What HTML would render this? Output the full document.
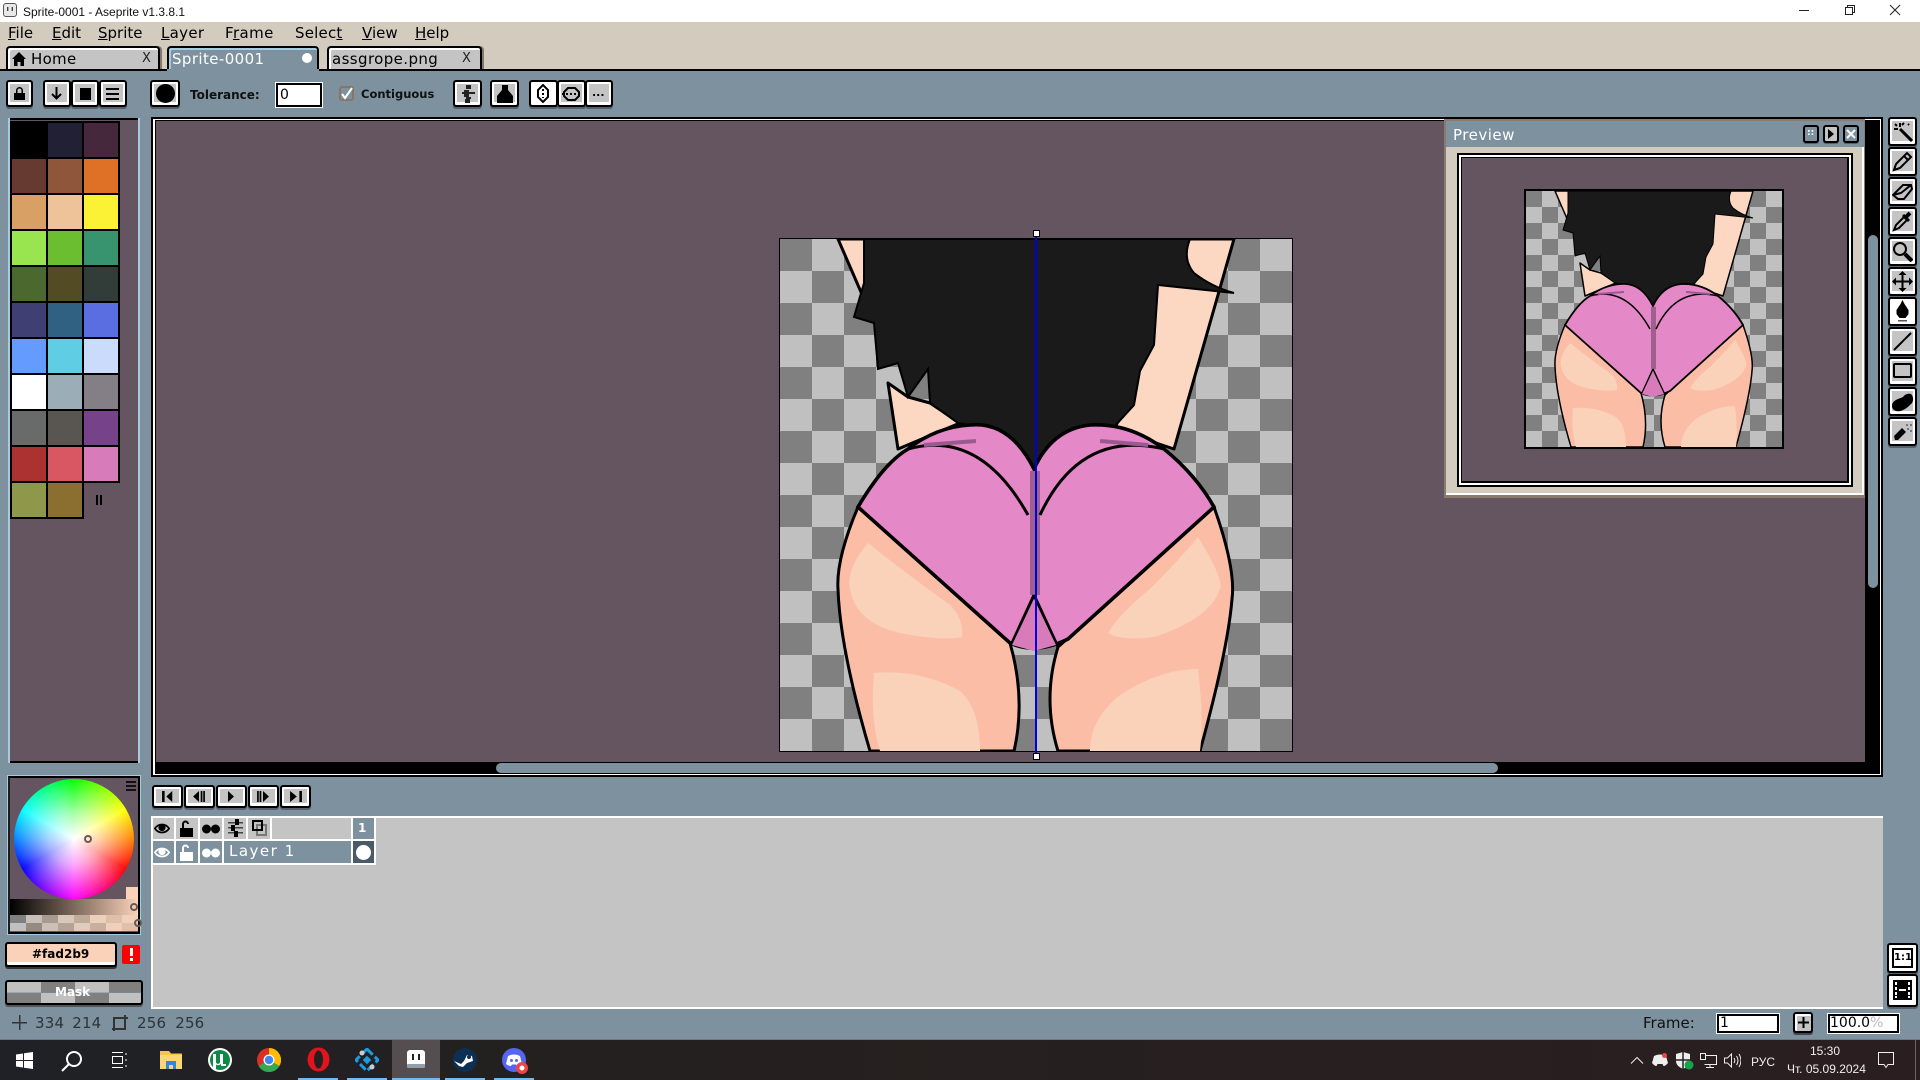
<!DOCTYPE html>
<html>
<head>
<meta charset="utf-8">
<title>Sprite-0001 - Aseprite v1.3.8.1</title>
<style>
html,body{margin:0;padding:0;width:1920px;height:1080px;overflow:hidden;background:#7d929e}
#r{position:relative;width:1920px;height:1080px;overflow:hidden;font-family:"DejaVu Sans","Liberation Sans",sans-serif;color:#000}
#r div,#r span,#r svg{position:absolute;box-sizing:border-box}
.t{white-space:nowrap;line-height:1}
.b{background:#c4c4c4;border:2px solid #000;border-radius:3px;box-shadow:inset 0 2px 0 #fff,inset 2px 0 0 #fff,inset -2px 0 0 #fff,inset 0 -3px 0 #fff,0 2px 0 #55606a}
.p{width:34px;height:34px}
.u{text-decoration:underline}
.i{background:#fff;border:2px solid #000;box-shadow:0 0 0 1px #fff}
.tab{height:24px;top:46px;background:#c4c4c4;border:2px solid #000;border-bottom:0;border-radius:4px 4px 0 0;box-shadow:inset 2px 2px 0 #fff,2px 0 0 #85766e}
</style>
</head>
<body>
<div id="r">

<!-- title bar -->
<div style="left:0;top:0;width:1920px;height:22px;background:#fff"></div>
<svg style="left:3px;top:3px" width="14" height="14" viewBox="0 0 14 14"><rect x=".5" y=".5" width="13" height="13" rx="2.5" fill="#e8e8e8" stroke="#555"/><rect x="4" y="4" width="1.4" height="4" fill="#444"/><rect x="8.600" y="4" width="1.4" height="4" fill="#444"/></svg>
<div class="t" style="left:23px;top:5px;font:12px 'Liberation Sans',sans-serif;color:#111">Sprite-0001 - Aseprite v1.3.8.1</div>
<svg style="left:1798px;top:4px" width="122" height="12" viewBox="0 0 122 12" fill="none" stroke="#222"><path d="M1 6.500h10"/><rect x="47.500" y="3.500" width="7" height="7"/><path d="M49.500 3.500v-2h7v7h-2"/><path d="M92 1l10 10M102 1L92 11"/></svg>

<!-- menu -->
<div style="left:0;top:22px;width:1920px;height:48px;background:#d3cbbe"></div>
<div class="t" style="left:8px;top:26px;font-size:15px"><span class="u" style="position:static">F</span>ile</div>
<div class="t" style="left:52px;top:26px;font-size:15px"><span class="u" style="position:static">E</span>dit</div>
<div class="t" style="left:98px;top:26px;font-size:15px"><span class="u" style="position:static">S</span>prite</div>
<div class="t" style="left:161px;top:26px;font-size:15px;letter-spacing:.3px"><span class="u" style="position:static">L</span>ayer</div>
<div class="t" style="left:225px;top:26px;font-size:15px;letter-spacing:.4px">F<span class="u" style="position:static">r</span>ame</div>
<div class="t" style="left:295px;top:26px;font-size:15px;letter-spacing:.2px">Selec<span class="u" style="position:static">t</span></div>
<div class="t" style="left:362px;top:26px;font-size:15px"><span class="u" style="position:static">V</span>iew</div>
<div class="t" style="left:415px;top:26px;font-size:15px"><span class="u" style="position:static">H</span>elp</div>

<!-- tabs -->
<div class="tab" style="left:6px;width:154px"></div>
<svg style="left:12px;top:52px" width="14" height="14" viewBox="0 0 14 14"><path d="M7 0L0 7h2v7h3.500v-4h3v4H12V7h2z"/></svg>
<div class="t" style="left:31px;top:52px;font-size:15px;letter-spacing:.3px">Home</div>
<div class="t" style="left:142px;top:52px;font-size:13px;color:#222">X</div>
<div class="tab" style="left:167px;width:152px;background:#7d929e;box-shadow:inset 2px 2px 0 #a5cbe0;border-color:#000"></div>
<div class="t" style="left:172px;top:52px;font-size:15px;letter-spacing:.4px;color:#fff">Sprite-0001</div>
<div style="left:302px;top:53px;width:10px;height:10px;border-radius:50%;background:#fff"></div>
<div class="tab" style="left:327px;width:155px"></div>
<div class="t" style="left:332px;top:52px;font-size:15px;letter-spacing:.4px">assgrope.png</div>
<div class="t" style="left:462px;top:52px;font-size:13px;color:#222">X</div>

<!-- toolbar -->
<div style="left:0;top:69px;width:1920px;height:2px;background:#000"></div>
<div style="left:167px;top:69px;width:152px;height:2px;background:#7d929e"></div>
<div style="left:0;top:71px;width:1920px;height:969px;background:#7d929e"></div>

<div class="b" style="left:6px;top:80px;width:27px;height:27px"></div>
<svg style="left:13px;top:87px" width="13" height="13" viewBox="0 0 13 13"><path d="M3 6V3.500a3.500 3.500 0 017 0V6h2v7H1V6zM4.500 6h4V3.500a2 2 0 00-4 0z"/></svg>
<div class="b" style="left:43px;top:80px;width:28px;height:27px"></div>
<svg style="left:50px;top:87px" width="13" height="13" viewBox="0 0 13 13" fill="none" stroke="#000" stroke-width="2"><path d="M6.500 0v11M2 7l4.500 4.500L11 7"/></svg>
<div class="b" style="left:71px;top:80px;width:28px;height:27px"></div>
<div style="left:80px;top:88px;width:11px;height:12px;background:#000"></div>
<div class="b" style="left:99px;top:80px;width:28px;height:27px"></div>
<svg style="left:106px;top:88px" width="13" height="12" viewBox="0 0 13 12"><path d="M0 0h13v2H0zM0 5h13v2H0zM0 10h13v2H0z"/></svg>

<div class="b" style="left:150px;top:80px;width:30px;height:27px"></div>
<div style="left:156px;top:84px;width:19px;height:19px;border-radius:50%;background:#000"></div>
<div class="t" style="left:190px;top:89px;font-size:12px;font-weight:bold;color:#111">Tolerance:</div>
<div class="i" style="left:276px;top:83px;width:46px;height:24px"></div>
<div class="t" style="left:280px;top:88px;font-size:14px">0</div>
<svg style="left:339px;top:86px" width="15" height="15" viewBox="0 0 15 15"><rect x="1" y="1" width="13" height="13" rx="2" fill="none" stroke="#8a7468" stroke-width="2"/><path d="M3 8l3 4 7-10" fill="none" stroke="#fff" stroke-width="2"/></svg>
<div class="t" style="left:361px;top:89px;font-size:11.500px;font-weight:bold;color:#111">Contiguous</div>

<div class="b" style="left:453px;top:80px;width:29px;height:27px"></div>
<svg style="left:460px;top:85px" width="15" height="18" viewBox="0 0 15 18" fill="#222"><path d="M6 0h5v4H6zM2 7h13v2H2zM4 5h5v6H4zM6 12h5v2H6zM4 10h5v2H4zM5 14h5v4H5z"/></svg>
<div class="b" style="left:490px;top:80px;width:29px;height:27px"></div>
<svg style="left:497px;top:85px" width="16" height="18" viewBox="0 0 16 18"><path d="M5 0h6v5l5 6v7H0v-7l5-6z"/></svg>
<div class="b" style="left:529px;top:80px;width:29px;height:27px;background:#fff"></div>
<svg style="left:536px;top:84px" width="14" height="19" viewBox="0 0 14 19" fill="none" stroke="#000" stroke-width="2"><path d="M7 1L2 6v7l5 5 5-5V6z"/><path d="M7 5v9" stroke-dasharray="2 2"/></svg>
<div class="b" style="left:557px;top:80px;width:29px;height:27px"></div>
<svg style="left:561px;top:87px" width="21" height="14" viewBox="0 0 21 14" fill="none" stroke="#000" stroke-width="2"><path d="M7 1h7l4 4v4l-4 4H7L3 9V5z"/><path d="M1 7h19" stroke-dasharray="2 2"/></svg>
<div class="b" style="left:585px;top:80px;width:28px;height:27px"></div>
<div class="t" style="left:592px;top:87px;font-size:11px;font-weight:bold">...</div>

<!-- palette -->
<div style="left:8px;top:118px;width:132px;height:645px;background:#645560;box-shadow:inset 2px 0 0 #a5cbe0,inset -2px 0 0 #a5cbe0,inset 0 2px 0 #000,inset 0 -2px 0 #000"></div>
<div style="left:10px;top:121px;width:110px;height:398px;background:#000"></div>
<div style="left:84px;top:483px;width:36px;height:36px;background:#645560"></div>
<div class="p" style="left:12px;top:123px;background:#000"></div><div class="p" style="left:48px;top:123px;background:#222034"></div><div class="p" style="left:84px;top:123px;background:#45283c"></div>
<div class="p" style="left:12px;top:159px;background:#663931"></div><div class="p" style="left:48px;top:159px;background:#8f563b"></div><div class="p" style="left:84px;top:159px;background:#df7126"></div>
<div class="p" style="left:12px;top:195px;background:#d9a066"></div><div class="p" style="left:48px;top:195px;background:#eec39a"></div><div class="p" style="left:84px;top:195px;background:#fbf236"></div>
<div class="p" style="left:12px;top:231px;background:#99e550"></div><div class="p" style="left:48px;top:231px;background:#6abe30"></div><div class="p" style="left:84px;top:231px;background:#37946e"></div>
<div class="p" style="left:12px;top:267px;background:#4b692f"></div><div class="p" style="left:48px;top:267px;background:#524b24"></div><div class="p" style="left:84px;top:267px;background:#323c39"></div>
<div class="p" style="left:12px;top:303px;background:#3f3f74"></div><div class="p" style="left:48px;top:303px;background:#306082"></div><div class="p" style="left:84px;top:303px;background:#5b6ee1"></div>
<div class="p" style="left:12px;top:339px;background:#639bff"></div><div class="p" style="left:48px;top:339px;background:#5fcde4"></div><div class="p" style="left:84px;top:339px;background:#cbdbfc"></div>
<div class="p" style="left:12px;top:375px;background:#fff"></div><div class="p" style="left:48px;top:375px;background:#9badb7"></div><div class="p" style="left:84px;top:375px;background:#847e87"></div>
<div class="p" style="left:12px;top:411px;background:#696a6a"></div><div class="p" style="left:48px;top:411px;background:#595652"></div><div class="p" style="left:84px;top:411px;background:#76428a"></div>
<div class="p" style="left:12px;top:447px;background:#ac3232"></div><div class="p" style="left:48px;top:447px;background:#d95763"></div><div class="p" style="left:84px;top:447px;background:#d77bba"></div>
<div class="p" style="left:12px;top:483px;background:#8f974a"></div><div class="p" style="left:48px;top:483px;background:#8a6f30"></div>
<div style="left:96px;top:495px;width:2px;height:10px;background:#000"></div><div style="left:100px;top:495px;width:2px;height:10px;background:#000"></div>

<!-- colour wheel -->
<div style="left:8px;top:776px;width:132px;height:158px;background:#645560;border:2px solid #000;border-left-color:#1c1c1c;box-shadow:0 0 0 1px #a5cbe0"></div>
<div style="left:14px;top:779px;width:120px;height:120px;border-radius:50%;background:radial-gradient(circle,#fff 0%,rgba(255,255,255,.65) 30%,rgba(255,255,255,0) 72%),conic-gradient(#0f0,#ff0,#f00,#f0f,#00f,#0ff,#0f0)"></div>
<div style="left:84px;top:835px;width:8px;height:8px;border:2px solid #6a5a55;border-radius:50%"></div>
<div style="left:126px;top:781px;width:10px;height:2px;background:#111"></div><div style="left:126px;top:785px;width:10px;height:2px;background:#111"></div><div style="left:126px;top:789px;width:10px;height:2px;background:#111"></div>
<div style="left:126px;top:887px;width:12px;height:12px;background:#fad2b9"></div>
<div style="left:10px;top:899px;width:128px;height:16px;background:linear-gradient(90deg,#000,#fad2b9)"></div>
<div style="left:10px;top:915px;width:128px;height:16px;background:
linear-gradient(90deg,#808080 0 16px,#c8c0b8 16px 32px,#a89a8e 32px 48px,#d8c8ba 48px 64px,#c0aa9a 64px 80px,#ecd0bc 80px 96px,#dfbfa8 96px 112px,#f2d0ba 112px) top/100% 8px no-repeat,
linear-gradient(90deg,#c0c0c0 0 16px,#948c84 16px 32px,#ccc0b6 32px 48px,#b4a496 48px 64px,#e0ccbc 64px 80px,#c8b09e 80px 96px,#f0d0bc 96px 112px,#e0c0aa 112px) bottom/100% 8px no-repeat"></div>
<div style="left:130px;top:903px;width:8px;height:8px;border:2px solid #6a5a55;border-radius:50%"></div>
<div style="left:134px;top:919px;width:8px;height:8px;border:2px solid #6a5a55;border-radius:50%"></div>

<div class="b" style="left:5px;top:942px;width:112px;height:25px;background:#fad2b9;box-shadow:inset 0 -3px 0 #fff,0 2px 0 #333"></div>
<div class="t" style="left:32px;top:948px;font-size:12px;font-weight:bold">#fad2b9</div>
<div style="left:122px;top:945px;width:18px;height:19px;background:#f00;border-radius:2px"></div>
<div style="left:130px;top:948px;width:3px;height:8px;background:#fff"></div><div style="left:130px;top:958px;width:3px;height:3px;background:#fff"></div>

<div style="left:5px;top:980px;width:138px;height:25px;border:2px solid #000;border-radius:3px;box-shadow:0 2px 0 #555;background:
linear-gradient(90deg,#c0c0c0 0 34px,#808080 34px 68px,#c0c0c0 68px 102px,#808080 102px) top/100% 50% no-repeat,
linear-gradient(90deg,#808080 0 34px,#c0c0c0 34px 68px,#808080 68px 102px,#c0c0c0 102px) bottom/100% 50% no-repeat"></div>
<div class="t" style="left:55px;top:986px;font-size:12px;font-weight:bold;color:#fff">Mask</div>

<!-- editor -->
<div style="left:151px;top:117px;width:1732px;height:660px;background:#000"></div>
<div style="left:153px;top:119px;width:1728px;height:656px;background:#fff"></div>
<div style="left:155px;top:120px;width:1725px;height:654px;background:#000"></div>
<div style="left:156px;top:121px;width:1709px;height:641px;background:#645560"></div>

<svg style="left:779px;top:238px" width="514" height="514" viewBox="-0.500 -0.500 257 257">
<defs>
<pattern id="c" width="32" height="32" patternUnits="userSpaceOnUse"><rect width="32" height="32" fill="#c0c0c0"/><rect width="16" height="16" fill="#808080"/><rect x="16" y="16" width="16" height="16" fill="#808080"/></pattern>
<g id="art">
<rect x="0" y="0" width="256" height="256" fill="url(#c)"/>
<g stroke="#000" stroke-width="1.500" stroke-linejoin="round" fill="#fcd7c2">
<path d="M29 0L42 30 46 0z"/>
<path d="M204 0h23l-8 28-22 77-30-10 8-15 5-30 5-30z"/>
<path d="M54 72l5 33 31-13-15-10-11-3z"/>
</g>
<path d="M42 0H205Q201 10 207 17Q216 24 227 27L189 23 187 53 180 66 177 83 167 94 147 95 134 105 127 115 120 104 107 95 89 92 75 82 74 65 64 79 59 62 49 65 47 42 37 39 42 22z" fill="#1a1a1a" stroke="#000"/>
<g stroke="#000" stroke-width="1.500" fill="#fcbda7">
<path d="M39 134Q28 160 29 175Q30 205 45 256H117Q123 230 115 202z"/>
<path d="M217 134Q228 165 226 180Q224 205 210 256H139Q131 230 139 204z"/>
</g>
<g fill="#fad2b9">
<path d="M44 152Q33 165 35 175Q38 192 60 197Q80 201 91 199Q92 190 85 183Q60 165 44 152z"/>
<path d="M47 217Q45 240 50 256H100Q100 235 90 226Q70 215 47 217z"/>
<path d="M209 149Q222 170 220 175Q215 190 187 199Q170 201 164 197Q170 187 185 175Q200 160 209 149z"/>
<path d="M209 215Q212 240 210 256H155Q155 240 170 228Q190 215 209 215z"/>
</g>
<path d="M39 134Q52 112 64 105Q78 94 95 93Q115 91 127 115Q136 95 155 93Q175 92 192 105Q208 118 217 134L144 200Q128 208 115 202z" fill="#e588c8" stroke="#000" stroke-width="1.800"/>
<path d="M125 116h5v62h-5z" fill="#a0608f"/>
<path d="M64 105Q100 95 124 138M192 105Q150 95 130 138M127 178L116 202M127 178L139 204" fill="none" stroke="#000" stroke-width="1.500"/>
<path d="M72 103l26-2" fill="none" stroke="#9a5a90" stroke-width="2"/>
<path d="M160 101l24 2" fill="none" stroke="#9a5a90" stroke-width="2"/>
<path d="M127 180l11 23-11 3-11-3z" fill="#d77bba"/>
<rect x="-.5" y="-.5" width="257" height="257" fill="none" stroke="#000" stroke-width="1"/>
</g>
</defs>
<use href="#art"/>
</svg>
<div style="left:1035px;top:233px;width:2px;height:524px;background:#0000d8"></div>
<div style="left:1033px;top:230px;width:7px;height:7px;background:#fff;border:1px solid #000"></div>
<div style="left:1033px;top:753px;width:7px;height:7px;background:#fff;border:1px solid #000"></div>
<div style="left:496px;top:763px;width:1002px;height:10px;background:#7d929e;border-radius:5px"></div>
<div style="left:1868px;top:235px;width:10px;height:353px;background:#7d929e;border-radius:5px"></div>

<!-- preview window -->
<div style="left:1444px;top:119px;width:421px;height:379px;background:#8a7a70"></div>
<div style="left:1446px;top:121px;width:418px;height:374px;background:#d3cbbe;box-shadow:inset -2px -2px 0 #fff"></div>
<div style="left:1446px;top:121px;width:418px;height:26px;background:#7d929e"></div>
<div class="t" style="left:1453px;top:128px;font-size:15px;letter-spacing:.5px;color:#fff">Preview</div>
<div class="b" style="left:1803px;top:125px;width:16px;height:18px;background:#7d929e;box-shadow:0 1px 0 #55606a"></div>
<div class="t" style="left:1807px;top:129px;font-size:9px;color:#fff;font-weight:bold">::</div>
<div class="b" style="left:1823px;top:125px;width:16px;height:18px;box-shadow:0 1px 0 #55606a"></div>
<svg style="left:1827px;top:129px" width="8" height="10" viewBox="0 0 8 10"><path d="M1 0l6 5-6 5z"/></svg>
<div class="b" style="left:1843px;top:125px;width:16px;height:18px;background:#7d929e;box-shadow:0 1px 0 #55606a"></div>
<svg style="left:1846px;top:129px" width="10" height="10" viewBox="0 0 10 10" fill="none" stroke="#fff" stroke-width="2"><path d="M1 1l8 8M9 1L1 9"/></svg>
<div style="left:1457px;top:153px;width:396px;height:334px;background:#000"></div>
<div style="left:1459px;top:155px;width:392px;height:330px;background:#fff"></div>
<div style="left:1461px;top:157px;width:388px;height:326px;background:#000"></div>
<div style="left:1462px;top:158px;width:385px;height:323px;background:#645560"></div>
<svg style="left:1524px;top:189px" width="260" height="260" viewBox="-2 -2 260 260"><use href="#art"/><rect x="-1" y="-1" width="258" height="258" fill="none" stroke="#000" stroke-width="2"/></svg>

<!-- right tools -->
<div class="b" style="left:1888px;top:117px;width:29px;height:29px"></div>
<svg style="left:1892px;top:121px" width="21" height="21" viewBox="0 0 21 21" fill="none" stroke="#000" stroke-width="2"><path d="M8 8l12 12" stroke-width="3"/><path d="M8 2v4M2 8h4M3 3l2 2M12 2l-2 2M16 3l1 1"/></svg>
<div class="b" style="left:1888px;top:147px;width:29px;height:29px"></div>
<svg style="left:1892px;top:151px" width="21" height="21" viewBox="0 0 21 21" fill="none" stroke="#000" stroke-width="2"><path d="M2 19l2-6L15 2l4 4L8 17z"/><path d="M12 5l4 4"/></svg>
<div class="b" style="left:1888px;top:177px;width:29px;height:29px"></div>
<svg style="left:1892px;top:181px" width="21" height="21" viewBox="0 0 21 21" fill="none" stroke="#000" stroke-width="2"><path d="M1 14l5 4h6l8-10-1-4h-8z"/><path d="M1 14l8-2 10-8"/></svg>
<div class="b" style="left:1888px;top:207px;width:29px;height:29px"></div>
<svg style="left:1892px;top:211px" width="21" height="21" viewBox="0 0 21 21" fill="none" stroke="#000" stroke-width="2"><path d="M2 19l2-5 8-8 3 3-8 8z"/><path d="M11 4l6 6" stroke-width="3"/><path d="M14 6l4-4" stroke-width="4"/></svg>
<div class="b" style="left:1888px;top:237px;width:29px;height:29px"></div>
<svg style="left:1892px;top:241px" width="21" height="21" viewBox="0 0 21 21" fill="none" stroke="#000" stroke-width="2"><circle cx="8" cy="8" r="6"/><path d="M13 13l7 7" stroke-width="4"/></svg>
<div class="b" style="left:1888px;top:267px;width:29px;height:29px"></div>
<svg style="left:1892px;top:271px" width="21" height="21" viewBox="0 0 21 21"><path d="M10.500 0l4 4h-3v5.500H17v-3l4 4-4 4v-3h-5.500V17h3l-4 4-4-4h3v-5.500H4v3l-4-4 4-4v3h5.500V4h-3z"/></svg>
<div class="b" style="left:1888px;top:297px;width:29px;height:29px;background:#fff"></div>
<svg style="left:1895px;top:300px" width="15" height="22" viewBox="0 0 15 22"><path d="M7.500 0l2 4 4 6v4l-3 4h-6l-3-4v-4l4-6z"/><rect x="3" y="20" width="9" height="1.500" fill="#555"/></svg>
<div class="b" style="left:1888px;top:327px;width:29px;height:29px"></div>
<svg style="left:1892px;top:331px" width="21" height="21" viewBox="0 0 21 21" fill="none" stroke="#000" stroke-width="2"><path d="M2 19L19 2"/></svg>
<div class="b" style="left:1888px;top:357px;width:29px;height:29px"></div>
<div style="left:1893px;top:363px;width:19px;height:15px;border:2px solid #000;border-radius:2px"></div>
<div class="b" style="left:1888px;top:387px;width:29px;height:29px"></div>
<svg style="left:1891px;top:392px" width="23" height="20" viewBox="0 0 23 20"><path d="M1 14C1 8 8 7 12 5c2-3 6-4 8-3 3 3 3 8-1 11-5 5-10 7-14 6-3-1-4-3-4-5z"/></svg>
<div class="b" style="left:1888px;top:417px;width:29px;height:29px"></div>
<svg style="left:1892px;top:421px" width="21" height="21" viewBox="0 0 21 21"><path d="M2 15l8-8 4 4-8 8H3z"/><path d="M15 7h2v2h-2zM18 3h2v2h-2zM14 3h2v2h-2zM18 9h2v2h-2z" fill="#777"/></svg>

<!-- anim buttons -->
<div class="b" style="left:152px;top:785px;width:31px;height:23px"></div>
<svg style="left:162px;top:791px" width="12" height="11" viewBox="0 0 14 13"><path d="M0 0h3v13H0zM12 0v13L5 6.500z"/></svg>
<div class="b" style="left:184px;top:785px;width:31px;height:23px"></div>
<svg style="left:193px;top:791px" width="12" height="11" viewBox="0 0 14 13"><path d="M7 0v13L0 6.500zM9 0h2v13H9zM12 0h2v13h-2z"/></svg>
<div class="b" style="left:216px;top:785px;width:31px;height:23px"></div>
<svg style="left:227px;top:791px" width="8" height="11" viewBox="0 0 9 13"><path d="M1 0l7 6.500-7 6.500z"/></svg>
<div class="b" style="left:248px;top:785px;width:31px;height:23px"></div>
<svg style="left:257px;top:791px" width="12" height="11" viewBox="0 0 14 13"><path d="M0 0h2v13H0zM3 0h2v13H3zM7 0l7 6.500L7 13z"/></svg>
<div class="b" style="left:280px;top:785px;width:31px;height:23px"></div>
<svg style="left:290px;top:791px" width="12" height="11" viewBox="0 0 14 13"><path d="M0 0l8 6.500L0 13zM11 0h3v13h-3z"/></svg>

<!-- timeline -->
<div style="left:151px;top:816px;width:1732px;height:193px;background:#c4c4c4;border:2px solid #fff;border-right:0"></div>
<div style="left:174px;top:816px;width:2px;height:49px;background:#fff"></div>
<div style="left:198px;top:816px;width:2px;height:49px;background:#fff"></div>
<div style="left:222px;top:816px;width:2px;height:49px;background:#fff"></div>
<div style="left:246px;top:816px;width:2px;height:25px;background:#fff"></div>
<div style="left:270px;top:816px;width:2px;height:25px;background:#fff"></div>
<div style="left:351px;top:816px;width:25px;height:49px;background:#fff"></div>
<div style="left:153px;top:839px;width:223px;height:2px;background:#fff"></div>
<div style="left:153px;top:863px;width:223px;height:2px;background:#fff"></div>
<div style="left:153px;top:841px;width:21px;height:22px;background:#7d929e"></div>
<div style="left:176px;top:841px;width:22px;height:22px;background:#7d929e"></div>
<div style="left:200px;top:841px;width:22px;height:22px;background:#7d929e"></div>
<div style="left:224px;top:841px;width:127px;height:22px;background:#7d929e"></div>
<div style="left:353px;top:818px;width:21px;height:21px;background:#7d929e"></div>
<div style="left:353px;top:841px;width:21px;height:22px;background:#4a5a66"></div>
<div class="t" style="left:358px;top:822px;font-size:12px;font-weight:bold;color:#fff">1</div>
<div style="left:356px;top:845px;width:15px;height:15px;border-radius:50%;background:#fff"></div>
<div class="t" style="left:229px;top:844px;font-size:15px;letter-spacing:1.500px;color:#fff">Layer 1</div>
<svg style="left:154px;top:822px" width="16" height="13" viewBox="0 0 18 14" fill="none" stroke="#000" stroke-width="2"><path d="M1 7c4-6 12-6 16 0-4 6-12 6-16 0z"/><circle cx="9" cy="6" r="3" fill="#000"/></svg>
<svg style="left:154px;top:846px" width="16" height="13" viewBox="0 0 18 14" fill="none" stroke="#fff" stroke-width="2"><path d="M1 7c4-6 12-6 16 0-4 6-12 6-16 0z"/><circle cx="9" cy="6" r="3" fill="#fff"/></svg>
<svg style="left:180px;top:820px" width="13" height="17" viewBox="0 0 13 17"><path d="M2 8V4a3.500 3.500 0 017 0h-2a1.500 1.500 0 00-3 0v4h9v9H0V8z"/></svg>
<svg style="left:180px;top:844px" width="13" height="17" viewBox="0 0 13 17" fill="#fff"><path d="M2 8V4a3.500 3.500 0 017 0h-2a1.500 1.500 0 00-3 0v4h9v9H0V8z"/></svg>
<svg style="left:202px;top:824px" width="18" height="10" viewBox="0 0 18 10"><circle cx="4.500" cy="5" r="4.500"/><circle cx="13.500" cy="5" r="4.500"/></svg>
<svg style="left:202px;top:848px" width="18" height="10" viewBox="0 0 18 10" fill="#fff"><circle cx="4.500" cy="5" r="4.500"/><circle cx="13.500" cy="5" r="4.500"/></svg>
<svg style="left:228px;top:819px" width="15" height="18" viewBox="0 0 15 18"><path d="M0 3h15v1.500H0zM0 8h15v1.500H0zM0 13h15v1.500H0z" fill="#444"/><path d="M7 0h4v6H7zM3 6h4v6H3zM6 12h4v6H6z"/></svg>
<svg style="left:252px;top:820px" width="15" height="16" viewBox="0 0 15 16" fill="none"><path d="M5 5h9v10H5z" stroke="#777" stroke-width="2"/><path d="M1 1h9v9H1z" stroke="#000" stroke-width="2"/></svg>

<div class="b" style="left:1887px;top:943px;width:31px;height:30px;background:#fff"></div>
<div style="left:1892px;top:948px;width:21px;height:20px;border:2px solid #000"></div>
<div class="t" style="left:1894px;top:953px;font-size:10px;font-weight:bold">1:1</div>
<div class="b" style="left:1887px;top:974px;width:31px;height:33px;background:#fff"></div>
<svg style="left:1893px;top:980px" width="19" height="20" viewBox="0 0 19 20"><path d="M0 0h19v20H0z"/><path d="M2 2h2v3H2zM15 2h2v3h-2zM2 7h2v3H2zM15 7h2v3h-2zM2 12h2v3H2zM15 12h2v3h-2zM2 16h2v2H2zM15 16h2v2h-2zM6 9h7v2H6z" fill="#fff"/></svg>

<!-- status bar -->
<svg style="left:12px;top:1015px" width="15" height="15" viewBox="0 0 15 15"><path d="M7 0h1.500v15H7zM0 7h15v1.500H0z" fill="#333"/></svg>
<div class="t" style="left:35px;top:1016px;font-size:15px;letter-spacing:.2px;color:#2d3338;word-spacing:3px">334 214</div>
<svg style="left:112px;top:1015px" width="16" height="16" viewBox="0 0 16 16" fill="none" stroke="#333" stroke-width="2"><path d="M2 3h11v11H2zM13 0v3h3M0 14h2v2"/></svg>
<div class="t" style="left:137px;top:1016px;font-size:15px;letter-spacing:.2px;color:#2d3338;word-spacing:4px">256 256</div>
<div class="t" style="left:1643px;top:1016px;font-size:15px;color:#111">Frame:</div>
<div class="i" style="left:1717px;top:1014px;width:62px;height:19px"></div>
<div class="t" style="left:1720px;top:1016px;font-size:14px">1</div>
<div class="b" style="left:1793px;top:1012px;width:20px;height:21px;box-shadow:inset 2px 2px 0 #fff,0 2px 0 #445"></div>
<svg style="left:1798px;top:1017px" width="11" height="11" viewBox="0 0 11 11"><path d="M4.500 0h2v4.500H11v2H6.500V11h-2V6.500H0v-2h4.500z"/></svg>
<div class="i" style="left:1828px;top:1014px;width:71px;height:19px"></div>
<div class="t" style="left:1830px;top:1016px;font-size:14px">100.0<span style="position:static;color:#bbb">%</span></div>

<!-- taskbar -->
<div style="left:0;top:1040px;width:1920px;height:40px;background:linear-gradient(90deg,#1f2126,#24201f 30%,#2a1e20)"></div>
<div style="left:0;top:1039px;width:1920px;height:1px;background:#6a7a84"></div>
<svg style="left:16px;top:1052px" width="17" height="17" viewBox="0 0 17 17" fill="#fff"><path d="M0 2.500L7 1.500V8H0zM8 1.300L17 0v8H8zM0 9h7v6.500L0 14.500zM8 9h9v8l-9-1.300z"/></svg>
<svg style="left:61px;top:1050px" width="22" height="22" viewBox="0 0 22 22" fill="none" stroke="#fff" stroke-width="2"><circle cx="13" cy="9" r="7"/><path d="M8 14l-7 7"/></svg>
<svg style="left:112px;top:1052px" width="16" height="16" viewBox="0 0 16 16" fill="none" stroke="#fff"><path d="M0 .5h11M0 15.500h11M.5 4.500h10v7H.5zM14 1v2M14 7v2M14 13v2" /></svg>
<svg style="left:160px;top:1051px" width="22" height="18" viewBox="0 0 22 18"><path d="M0 0h9l2 2.500h11V18H0z" fill="#f5c54a"/><path d="M0 4h22v14H0z" fill="#fbd774"/><path d="M6 10h10v8H6z" fill="#2f88d9"/><path d="M9 14h4v4H9z" fill="#fbd774"/></svg>
<svg style="left:208px;top:1048px" width="24" height="24" viewBox="0 0 24 24"><circle cx="12" cy="12" r="12" fill="#fff"/><circle cx="12" cy="12" r="10" fill="#0b8a45"/><path d="M5 6h3v8c0 2.500 4 2.500 4 0V6h3v10h3v2h-5v-2c-2 1.500-4 1.500-5 .5V21H5z" fill="#fff"/></svg>
<svg style="left:257px;top:1048px" width="24" height="24" viewBox="0 0 24 24"><circle cx="12" cy="12" r="12" fill="#d93025"/><path d="M12 12L12 0A12 12 0 0 1 22.400 18z" fill="#fbbc04"/><path d="M12 12L22.400 18A12 12 0 0 1 1.600 18z" fill="#34a853"/><circle cx="12" cy="12" r="5.500" fill="#fff"/><circle cx="12" cy="12" r="4.200" fill="#4285f4"/></svg>
<svg style="left:307px;top:1047px" width="23" height="25" viewBox="0 0 23 25"><ellipse cx="11.500" cy="12.500" rx="11" ry="12" fill="#e1141e"/><ellipse cx="11.500" cy="12.500" rx="4.500" ry="9" fill="#24201f"/></svg>
<svg style="left:355px;top:1048px" width="24" height="24" viewBox="0 0 24 24" fill="none" stroke="#1d9ae0" stroke-width="3"><path d="M12 1l11 11-11 11L1 12z" stroke-dasharray="8 3"/><rect x="9" y="9" width="6" height="6" transform="rotate(45 12 12)" fill="#1d9ae0" stroke="none"/><circle cx="7" cy="5" r="2.500" fill="#ccc" stroke="none"/><circle cx="17" cy="19" r="2.500" fill="#ccc" stroke="none"/></svg>
<div style="left:392px;top:1040px;width:48px;height:40px;background:#544e50"></div>
<svg style="left:407px;top:1050px" width="18" height="18" viewBox="0 0 18 18"><rect width="18" height="18" rx="3" fill="#fff"/><rect y="14" width="18" height="4" rx="1" fill="#8fa0aa"/><rect x="5" y="4" width="2" height="6" fill="#222"/><rect x="11" y="4" width="2" height="6" fill="#222"/></svg>
<svg style="left:453px;top:1048px" width="24" height="24" viewBox="0 0 24 24"><circle cx="12" cy="12" r="12" fill="#0d2f52"/><path d="M1 13l7 3 3-3 3-6 5 1 1 5-6 2-4 4-4-1z" fill="#fff"/><circle cx="16" cy="9" r="2" fill="#0d2f52"/></svg>
<svg style="left:502px;top:1048px" width="26" height="26" viewBox="0 0 26 26"><circle cx="12" cy="12" r="12" fill="#5865f2"/><path d="M6 8c4-2 8-2 12 0l2 8c-2 1.500-4 2-5 2l-1-1.500h-4L9 18c-1 0-3-.5-5-2z" fill="#fff"/><circle cx="9.500" cy="12.500" r="1.500" fill="#5865f2"/><circle cx="14.500" cy="12.500" r="1.500" fill="#5865f2"/><circle cx="20" cy="20" r="6" fill="#ef4444"/><circle cx="20" cy="20" r="2.500" fill="#fff"/></svg>

<div style="left:298px;top:1078px;width:40px;height:2px;background:#76b9ed"></div>
<div style="left:347px;top:1078px;width:40px;height:2px;background:#76b9ed"></div>
<div style="left:392px;top:1078px;width:48px;height:2px;background:#76b9ed"></div>
<div style="left:445px;top:1078px;width:40px;height:2px;background:#76b9ed"></div>
<div style="left:494px;top:1078px;width:40px;height:2px;background:#76b9ed"></div>

<svg style="left:1630px;top:1056px" width="14" height="8" viewBox="0 0 14 8" fill="none" stroke="#eee"><path d="M1 7.500l6-6 6 6"/></svg>
<svg style="left:1652px;top:1053px" width="16" height="14" viewBox="0 0 16 14"><path d="M2 3c4-2 8-2 12 0l2 7c-2 2-3 3-4.500 3l-1-2h-5l-1 2C3 13 2 12 0 10z" fill="#eee"/><circle cx="12.500" cy="2.500" r="2.500" fill="#ef4444"/></svg>
<svg style="left:1676px;top:1052px" width="18" height="18" viewBox="0 0 18 18"><path d="M7 0l7 2v7c0 4-3 6-7 8-4-2-7-4-7-8V2z" fill="#eee"/><path d="M7 0v17M0 8h14" stroke="#222" stroke-width="1.500"/><circle cx="13" cy="13" r="4.500" fill="#16a34a"/></svg>
<svg style="left:1700px;top:1053px" width="17" height="15" viewBox="0 0 17 15" fill="none" stroke="#eee"><path d="M4.500 2.500H16.500V11.500H4.500M10 11.500V14.500M6 14.500h8"/><rect x=".5" y=".5" width="5" height="6" fill="#24201f"/></svg>
<svg style="left:1724px;top:1053px" width="17" height="15" viewBox="0 0 17 15" fill="none" stroke="#eee"><path d="M.5 5h3l4-4v13l-4-4h-3zM10 5c1 1.500 1 3.500 0 5M12.500 3c2 3 2 6 0 9M15 1c2.500 4 2.500 9 0 13"/></svg>
<div class="t" style="left:1751px;top:1055px;font:12px 'Liberation Sans',sans-serif;color:#eee">РУС</div>
<div class="t" style="left:1810px;top:1044px;font:12px 'Liberation Sans',sans-serif;color:#eee">15:30</div>
<div class="t" style="left:1787px;top:1062px;font:12px 'Liberation Sans',sans-serif;color:#eee">Чт. 05.09.2024</div>
<svg style="left:1878px;top:1052px" width="18" height="17" viewBox="0 0 18 17" fill="none" stroke="#eee"><path d="M.5.500h15v12H10l-2 3-2-3H.5z"/></svg>
<div style="left:1915px;top:1040px;width:1px;height:40px;background:#666"></div>
</div>
</body>
</html>
